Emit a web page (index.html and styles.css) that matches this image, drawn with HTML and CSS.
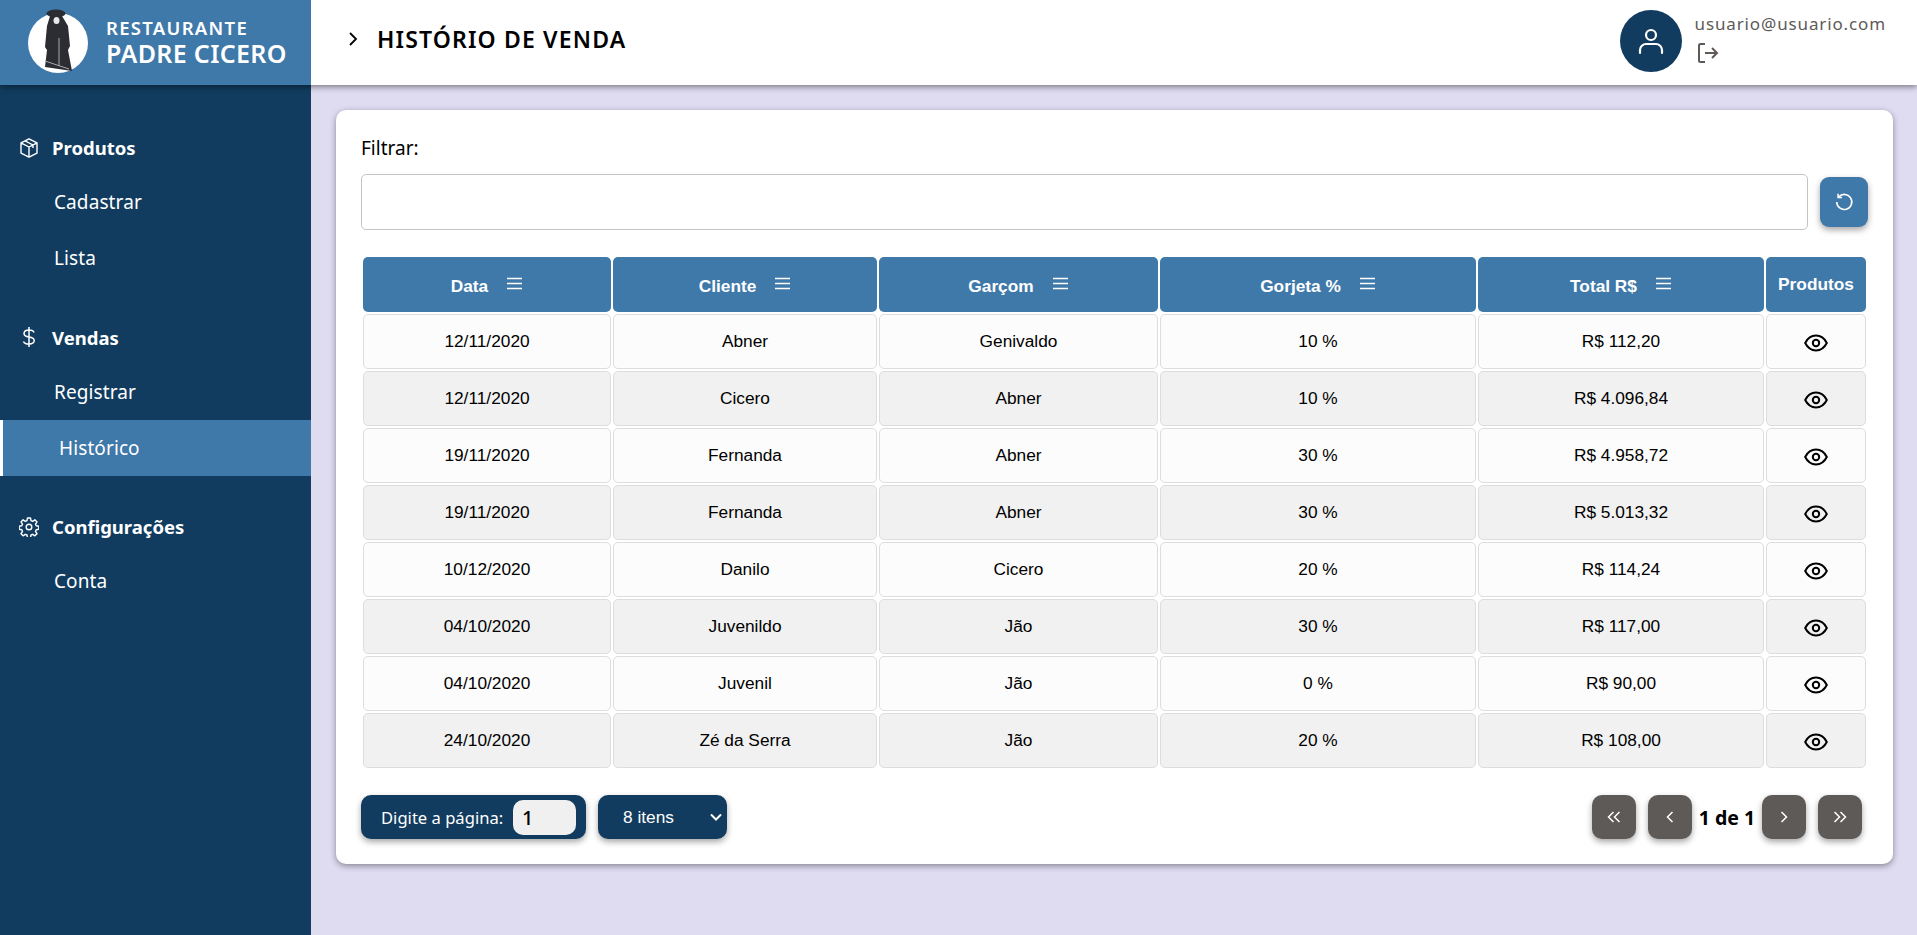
FILE: index.html
```html
<!doctype html>
<html lang="pt-BR">
<head>
	<meta charset="utf-8">
	<title>Restaurante Padre Cicero - Histórico de venda</title>
	<link rel="stylesheet" href="styles.css">
</head>
<body>

	<svg class="icon-defs" width="0" height="0">
		<symbol id="i-menu" viewBox="0 0 17 13">
			<path d="M1 1.5h15M1 6.5h15M1 11.5h15" fill="none" stroke="currentColor" stroke-width="1.3"/>
		</symbol>
		<symbol id="i-eye" viewBox="0 0 24 18">
			<path d="M1.2 9C3.6 4.2 7.4 1.6 12 1.6S20.4 4.2 22.8 9C20.4 13.8 16.6 16.4 12 16.4S3.6 13.8 1.2 9Z" fill="none" stroke="currentColor" stroke-width="2"/>
			<circle cx="12" cy="9" r="3.2" fill="none" stroke="currentColor" stroke-width="2"/>
		</symbol>
	</svg>

	<header class="topbar">
		<div class="brand">
			<svg class="brand-logo" viewBox="0 0 64 66">
				<circle cx="32" cy="35" r="30" fill="#fff"/>
				<ellipse cx="30" cy="5.500" rx="9.500" ry="4" fill="#2c2c33"/>
				<path d="M24 8h12l6 10 2 20-2 4 4 21-27-4 2-17-2-3 2-21z" fill="#2c2c33"/>
				<ellipse cx="30.500" cy="12.500" rx="3" ry="3.500" fill="#e8e8e8"/>
				<path d="M19 53l24 8M33 30v28" stroke="#a9a9ad" stroke-width="1" fill="none"/>
			</svg>
			<div class="brand-text">
				<span class="brand-small">RESTAURANTE</span>
				<span class="brand-big">PADRE CICERO</span>
			</div>
		</div>
		<div class="topbar-main">
			<div class="page-title">
				<svg class="title-arrow" viewBox="0 0 10 16"><path d="M2 2l6 6-6 6" fill="none" stroke="currentColor" stroke-width="1.8"/></svg>
				<h1>HISTÓRIO DE VENDA</h1>
			</div>
			<div class="user">
				<div class="avatar">
					<svg viewBox="0 0 26 28" width="26" height="28"><circle cx="13" cy="8" r="5" fill="none" stroke="#fff" stroke-width="2.2"/><path d="M2 26v-3c0-3.500 3-6 6-6h10c3 0 6 2.500 6 6v3" fill="none" stroke="#fff" stroke-width="2.2" stroke-linecap="round"/></svg>
				</div>
				<div class="user-info">
					<span class="user-mail">usuario@usuario.com</span>
					<svg class="logout" viewBox="0 0 22 22"><path d="M8 2H3.500C2.600 2 2 2.600 2 3.500v15c0 .9.600 1.500 1.500 1.500H8M8 11h12M15 6l5 5-5 5" fill="none" stroke="currentColor" stroke-width="2"/></svg>
				</div>
			</div>
		</div>
	</header>

	<div class="layout">
		<nav class="sidebar">
			<div class="nav-group">
				<div class="nav-title">
					<svg class="nav-icon" viewBox="0 0 20 20"><path d="M10 .8l8 4v10.400l-8 4-8-4V4.800zM2 4.800L10 9l8-4.200M10 9v10M6 2.800l8 4.200v3" fill="none" stroke="currentColor" stroke-width="1.400" stroke-linejoin="round"/></svg>
					Produtos
				</div>
				<a class="nav-item">Cadastrar</a>
				<a class="nav-item">Lista</a>
			</div>
			<div class="nav-group">
				<div class="nav-title">
					<svg class="nav-icon" viewBox="0 0 20 20"><path d="M10 0v20M15 5.500C14.500 3.800 12.500 3 10 3 7.200 3 5 4.200 5 6.500S7.200 9.600 10 10s5.200 1.300 5.200 3.600-2.400 3.400-5.200 3.400-4.900-.8-5.500-2.600" fill="none" stroke="currentColor" stroke-width="1.500"/></svg>
					Vendas
				</div>
				<a class="nav-item">Registrar</a>
				<a class="nav-item active">Histórico</a>
			</div>
			<div class="nav-group">
				<div class="nav-title">
					<svg class="nav-icon" viewBox="0 0 20 20"><circle cx="10" cy="10" r="2.800" fill="none" stroke="currentColor" stroke-width="1.400"/><path d="M8.500 1h3l.5 2.600 1.700.7 2.200-1.500 2.100 2.100-1.500 2.200.7 1.700 2.600.5v3l-2.600.5-.7 1.700 1.500 2.200-2.100 2.100-2.200-1.500-1.700.7-.5 2.600h-3l-.5-2.600-1.700-.7-2.200 1.500-2.100-2.100 1.500-2.200-.7-1.700-2.600-.5v-3l2.600-.5.7-1.700-1.500-2.200 2.100-2.100 2.200 1.500 1.700-.7z" fill="none" stroke="currentColor" stroke-width="1.400" stroke-linejoin="round"/></svg>
					Configurações
				</div>
				<a class="nav-item">Conta</a>
			</div>
		</nav>

		<main class="content">
			<section class="card">
				<label class="filter-label" for="filtro">Filtrar:</label>
				<div class="filter-row">
					<input class="filter-input" id="filtro" type="text">
					<button class="refresh" type="button">
						<svg viewBox="0 0 22 22" width="20" height="20"><path d="M5.300 5.200A8.300 8.300 0 1 1 3 11M4.500 1.800v4.300h4.300" fill="none" stroke="#fff" stroke-width="1.700"/></svg>
					</button>
				</div>

				<table class="sales">
					<colgroup>
						<col class="c-data"><col class="c-cliente"><col class="c-garcom"><col class="c-gorjeta"><col class="c-total"><col class="c-prod">
					</colgroup>
					<thead>
						<tr>
							<th><span class="th-in"><span class="th-text">Data</span><svg class="th-icon"><use href="#i-menu"/></svg></span></th>
							<th><span class="th-in"><span class="th-text">Cliente</span><svg class="th-icon"><use href="#i-menu"/></svg></span></th>
							<th><span class="th-in"><span class="th-text">Garçom</span><svg class="th-icon"><use href="#i-menu"/></svg></span></th>
							<th><span class="th-in"><span class="th-text">Gorjeta %</span><svg class="th-icon"><use href="#i-menu"/></svg></span></th>
							<th><span class="th-in"><span class="th-text">Total R$</span><svg class="th-icon"><use href="#i-menu"/></svg></span></th>
							<th>Produtos</th>
						</tr>
					</thead>
					<tbody>
						<tr><td>12/11/2020</td><td>Abner</td><td>Genivaldo</td><td>10 %</td><td>R$ 112,20</td><td><svg class="eye"><use href="#i-eye"/></svg></td></tr>
						<tr><td>12/11/2020</td><td>Cicero</td><td>Abner</td><td>10 %</td><td>R$ 4.096,84</td><td><svg class="eye"><use href="#i-eye"/></svg></td></tr>
						<tr><td>19/11/2020</td><td>Fernanda</td><td>Abner</td><td>30 %</td><td>R$ 4.958,72</td><td><svg class="eye"><use href="#i-eye"/></svg></td></tr>
						<tr><td>19/11/2020</td><td>Fernanda</td><td>Abner</td><td>30 %</td><td>R$ 5.013,32</td><td><svg class="eye"><use href="#i-eye"/></svg></td></tr>
						<tr><td>10/12/2020</td><td>Danilo</td><td>Cicero</td><td>20 %</td><td>R$ 114,24</td><td><svg class="eye"><use href="#i-eye"/></svg></td></tr>
						<tr><td>04/10/2020</td><td>Juvenildo</td><td>Jão</td><td>30 %</td><td>R$ 117,00</td><td><svg class="eye"><use href="#i-eye"/></svg></td></tr>
						<tr><td>04/10/2020</td><td>Juvenil</td><td>Jão</td><td>0 %</td><td>R$ 90,00</td><td><svg class="eye"><use href="#i-eye"/></svg></td></tr>
						<tr><td>24/10/2020</td><td>Zé da Serra</td><td>Jão</td><td>20 %</td><td>R$ 108,00</td><td><svg class="eye"><use href="#i-eye"/></svg></td></tr>
					</tbody>
				</table>

				<div class="pager">
					<div class="pager-left">
						<div class="page-jump">
							<span>Digite a página:</span>
							<input class="page-input" type="text" value="1">
						</div>
						<div class="size-wrap">
							<select class="page-size">
								<option>8 itens</option>
								<option>16 itens</option>
							</select>
							<svg class="size-arrow" viewBox="0 0 12 8"><path d="M1 1.500l5 5 5-5" fill="none" stroke="#fff" stroke-width="2"/></svg>
						</div>
					</div>
					<div class="pager-right">
						<button class="page-btn" type="button"><svg viewBox="0 0 14 12" width="14" height="12"><path d="M6.500 1L1.500 6l5 5M12.500 1l-5 5 5 5" fill="none" stroke="#fff" stroke-width="1.500"/></svg></button>
						<button class="page-btn" type="button"><svg viewBox="0 0 8 12" width="8" height="12"><path d="M6.500 1L1.500 6l5 5" fill="none" stroke="#fff" stroke-width="1.500"/></svg></button>
						<span class="page-count">1 de 1</span>
						<button class="page-btn" type="button"><svg viewBox="0 0 8 12" width="8" height="12"><path d="M1.500 1l5 5-5 5" fill="none" stroke="#fff" stroke-width="1.500"/></svg></button>
						<button class="page-btn" type="button"><svg viewBox="0 0 14 12" width="14" height="12"><path d="M1.500 1l5 5-5 5M7.500 1l5 5-5 5" fill="none" stroke="#fff" stroke-width="1.500"/></svg></button>
					</div>
				</div>
			</section>
		</main>
	</div>

</body>
</html>
```

FILE: styles.css
```css
* {
	box-sizing: border-box;
}
html, body {
	height: 100%;
}
body {
	margin: 0;
	display: flex;
	flex-direction: column;
	overflow: hidden;
	background-color: #dfdcf2;
	color: #000;
	font-family: "Noto Sans", "Lato", sans-serif;
}
.icon-defs {
	display: block;
	height: 0;
}

/* top bar */
.topbar {
	position: relative;
	z-index: 2;
	display: flex;
	flex: 0 0 85px;
	background-color: #fff;
	box-shadow: 0 2px 6px rgba(0, 0, 0, 0.45);
}
.brand {
	display: flex;
	align-items: center;
	width: 311px;
	padding-left: 26px;
	background-color: #3f79a9;
	color: #fff;
}
.brand-logo {
	width: 64px;
	height: 66px;
	margin-bottom: 4px;
}
.brand-text {
	display: flex;
	flex-direction: column;
	margin-left: 16px;
	font-weight: 600;
}
.brand-small {
	font-size: 18.5px;
	line-height: 22px;
	letter-spacing: 1.3px;
}
.brand-big {
	font-size: 25px;
	line-height: 29px;
	letter-spacing: 0.35px;
}
.topbar-main {
	display: flex;
	flex: 1;
	align-items: center;
	justify-content: space-between;
}
.page-title {
	display: flex;
	align-items: center;
	padding: 0 0 7px 37px;
}
.title-arrow {
	width: 10px;
	height: 16px;
}
h1 {
	margin: 0 0 0 19px;
	font-size: 23px;
	font-weight: 600;
	letter-spacing: 1.15px;
}
.user {
	display: flex;
	align-items: center;
	padding: 0 31px 3px 0;
}
.avatar {
	display: flex;
	align-items: center;
	justify-content: center;
	width: 62px;
	height: 62px;
	border-radius: 50%;
	background-color: #113c5f;
}
.user-info {
	display: flex;
	flex-direction: column;
	margin-left: 13px;
	color: #5e5a58;
}
.user-mail {
	font-size: 17px;
	line-height: 20px;
	letter-spacing: 0.87px;
	margin-top: -4px;
}
.logout {
	width: 22px;
	height: 22px;
	margin: 8px 0 0 2px;
}

/* side menu */
.layout {
	display: flex;
	flex: 1;
	min-height: 0;
}
.sidebar {
	width: 311px;
	padding-top: 37px;
	background-color: #113c5f;
	color: #fff;
}
.nav-group {
	margin-bottom: 25.6px;
}
.nav-title {
	display: flex;
	align-items: center;
	height: 52px;
	padding: 0 0 1px 19px;
	font-size: 18.5px;
	font-weight: 700;
}
.nav-icon {
	width: 20px;
	height: 20px;
	margin-right: 13px;
}
.nav-item {
	display: flex;
	align-items: center;
	height: 56px;
	padding-left: 54px;
	font-size: 19px;
	letter-spacing: 0.1px;
}
.nav-item.active {
	padding-left: 56px;
	border-left: 3px solid #fff;
	background-color: #3f79a9;
}

/* main card */
.content {
	flex: 1;
	padding: 25px 24px 0 25px;
}
.card {
	padding: 25px;
	border-radius: 10px;
	background-color: #fff;
	box-shadow: 0 2px 6px rgba(0, 0, 0, 0.4);
}
.filter-label {
	display: block;
	height: 39px;
	padding-top: 2px;
	font-size: 19px;
	line-height: 22px;
}
.filter-row {
	display: flex;
	align-items: center;
	margin-bottom: 25px;
}
.filter-input {
	flex: 1;
	height: 56px;
	border: 1px solid #c4c4c4;
	border-radius: 5px;
}
.refresh {
	display: flex;
	align-items: center;
	justify-content: center;
	width: 48px;
	height: 50px;
	margin-left: 12px;
	border: 0;
	border-radius: 9px;
	background-color: #3f79a9;
	box-shadow: 0 3px 6px rgba(0, 0, 0, 0.35);
}

/* table */
.sales {
	width: 100%;
	table-layout: fixed;
	border-spacing: 2px;
	font-family: "Liberation Sans", Arial, sans-serif;
	font-size: 17.3px;
	text-align: center;
}
.c-data { width: 248px; }
.c-cliente { width: 264px; }
.c-garcom { width: 279px; }
.c-gorjeta { width: 316px; }
.c-total { width: 286px; }
.c-prod { width: 100px; }
.sales th {
	height: 55px;
	padding: 0;
	border-radius: 5px;
	background-color: #3f79a9;
	color: #fff;
	font-weight: 700;
}
.th-in {
	display: inline-flex;
	align-items: center;
}
.th-text {
	padding-top: 3px;
}
.th-icon {
	width: 17px;
	height: 13px;
	margin: 0 0 2px 18px;
}
.sales td {
	height: 55px;
	padding: 0;
	border: 1px solid #ddd;
	border-radius: 5px;
	background-color: #fcfcfc;
}
.sales tbody tr:nth-child(even) td {
	background-color: #f1f1f1;
}
.eye {
	display: block;
	width: 24px;
	height: 18px;
	margin: 2px auto 0;
	color: #000;
}

/* paging */
.pager {
	display: flex;
	align-items: center;
	justify-content: space-between;
	margin-top: 25px;
}
.pager-left {
	display: flex;
	gap: 12px;
}
.page-jump {
	display: flex;
	align-items: center;
	justify-content: space-between;
	width: 225px;
	height: 44px;
	padding: 0 10px 0 20px;
	border-radius: 10px;
	background-color: #113c5f;
	box-shadow: 0 3px 6px rgba(0, 0, 0, 0.35);
	color: #fff;
	font-size: 16.6px;
}
.page-input {
	width: 63px;
	height: 35px;
	padding: 0 9px;
	border: 0;
	border-radius: 10px;
	background-color: #f0f0f0;
	font-family: "Noto Sans", sans-serif;
	font-size: 20px;
	font-weight: 500;
}
.size-wrap {
	position: relative;
	width: 129px;
	height: 44px;
}
.page-size {
	width: 100%;
	height: 100%;
	padding-left: 25px;
	border: 0;
	border-radius: 10px;
	appearance: none;
	background-color: #113c5f;
	box-shadow: 0 3px 6px rgba(0, 0, 0, 0.35);
	color: #fff;
	font-family: "Liberation Sans", Arial, sans-serif;
	font-size: 17.3px;
}
.size-arrow {
	position: absolute;
	top: 18px;
	right: 5px;
	width: 12px;
	height: 8px;
}
.pager-right {
	display: flex;
	align-items: center;
	padding-right: 6px;
}
.page-btn {
	display: flex;
	align-items: center;
	justify-content: center;
	width: 44px;
	height: 44px;
	margin-left: 12px;
	border: 0;
	border-radius: 10px;
	background-color: #5e5a58;
	box-shadow: 0 3px 6px rgba(0, 0, 0, 0.35);
}
.page-count {
	width: 70px;
	text-align: center;
	font-size: 19.5px;
	font-weight: 700;
}
.page-count + .page-btn {
	margin-left: 0;
}
```
